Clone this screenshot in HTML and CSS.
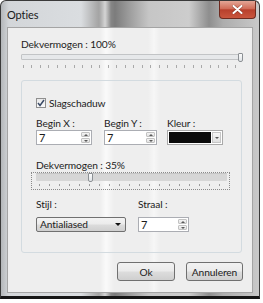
FILE: index.html
```html
<!DOCTYPE html>
<html lang="nl">
<head>
    <meta charset="UTF-8" />
    <title>Opties</title>
    <link rel="stylesheet" href="styles.css">
</head>
<body>

<div class="window">
    <div class="titlebar">
        <span class="title">Opties</span>
        <span class="close">
            <svg width="11" height="9" viewBox="0 0 11 9">
                <path d="M1.5 1 L9.5 8 M9.5 1 L1.5 8" stroke="#5a1f16" stroke-width="3" stroke-linecap="round" opacity="0.5"/>
                <path d="M1.5 1 L9.5 8 M9.5 1 L1.5 8" stroke="#fff" stroke-width="2" stroke-linecap="round"/>
            </svg>
        </span>
    </div>

    <div class="client">
        <!-- Opacity of the layer -->
        <div class="caption">Dekvermogen : 100%</div>
        <div class="slider slider-top">
            <div class="track"></div>
            <div class="thumb thumb-end"></div>
            <div class="ticks"></div>
        </div>

        <!-- Drop shadow settings -->
        <div class="group">
            <div class="check">
                <span class="box">
                    <svg width="8" height="8" viewBox="0 0 8 8">
                        <path d="M1 4 L3 6.5 L7 1" fill="none" stroke="#3a4a66" stroke-width="1.5"/>
                    </svg>
                </span>
                <span>Slagschaduw</span>
            </div>

            <div class="fields">
                <div class="field field-x">
                    <span class="field-label">Begin X :</span>
                    <div class="spin">
                        <span class="value">7</span>
                        <span class="arrows"><span class="up"></span><span class="down"></span></span>
                    </div>
                </div>
                <div class="field field-y">
                    <span class="field-label">Begin Y :</span>
                    <div class="spin">
                        <span class="value">7</span>
                        <span class="arrows"><span class="up"></span><span class="down"></span></span>
                    </div>
                </div>
                <div class="field field-color">
                    <span class="field-label">Kleur :</span>
                    <div class="color">
                        <span class="swatch"></span>
                        <span class="color-btn"><span class="tri"></span></span>
                    </div>
                </div>
            </div>

            <div class="caption caption-2">Dekvermogen : 35%</div>
            <div class="slider slider-box">
                <div class="track track-wide"></div>
                <div class="thumb thumb-35"></div>
                <div class="ticks ticks-wide"></div>
            </div>

            <div class="fields fields-2">
                <div class="field field-style">
                    <span class="field-label">Stijl :</span>
                    <div class="combo">
                        <span>Antialiased</span>
                        <span class="combo-tri"></span>
                    </div>
                </div>
                <div class="field field-radius">
                    <span class="field-label">Straal :</span>
                    <div class="spin">
                        <span class="value">7</span>
                        <span class="arrows"><span class="up"></span><span class="down"></span></span>
                    </div>
                </div>
            </div>
        </div>

        <div class="buttons">
            <button class="btn btn-ok">Ok</button>
            <button class="btn btn-cancel">Annuleren</button>
        </div>
    </div>
</div>

</body>
</html>
```

FILE: styles.css
```css
* {
    box-sizing: border-box;
}
body {
    margin: 0;
    background-color: #ffffff;
    font-family: 'Lato', sans-serif;
    font-size: 10.2px;
    letter-spacing: -0.1px;
    color: #1c1c1c;
}
.window {
    width: 260px;
    height: 299px;
    border: 1px solid #3a3a3a;
    border-bottom: 3px solid #161616;
    border-radius: 6px 6px 0 0;
    padding: 0 6px 3px 6px;
    display: flex;
    flex-direction: column;
    background:
        linear-gradient(to right, rgba(255,255,255,0) 98px, rgba(255,255,255,0.6) 104px, rgba(255,255,255,0) 110px),
        linear-gradient(to right, #b4b7ba 0, #d3d6d9 8px, #dadde0 80px, #a9a9a9 96px, #7c7c7c 114px, #9c9c9c 128px, #c6c6c6 148px, #cdcdcd 188px, #8e8e8e 208px, #adadad 222px, #c9c9c9 258px);
}
.titlebar {
    height: 26px;
    display: flex;
    justify-content: space-between;
    align-items: flex-start;
    margin-right: -3px;
}
.title {
    padding-top: 6px;
    font-size: 11px;
    line-height: 16px;
    color: #1a1a1a;
}
.close {
    width: 37px;
    height: 18px;
    border: 1px solid #6e2a1f;
    border-top: none;
    border-radius: 0 0 4px 4px;
    background: linear-gradient(#e3a696, #d06c58 45%, #b8402c 52%, #c9563e);
    display: flex;
    align-items: center;
    justify-content: center;
}
.client {
    flex: 1;
    border: 1px solid #a4a4a4;
    background:
        linear-gradient(to right, rgba(255,255,255,0) 92px, rgba(255,255,255,0.7) 98px, rgba(255,255,255,0) 106px, rgba(255,255,255,0) 140px, rgba(255,255,255,0.5) 146px, rgba(255,255,255,0) 152px),
        #eeeeee;
    padding: 8px 10px 0 13px;
}
.caption {
    line-height: 16px;
}
.slider {
    position: relative;
}
.slider-top {
    height: 28px;
    padding-top: 2px;
}
.track {
    height: 6px;
    border: 1px solid #c2c4c6;
    border-radius: 1px;
    background-color: #e6e8ea;
}
.ticks {
    height: 3px;
    margin-top: 5px;
    margin-left: 2px;
    margin-right: 2px;
    background: repeating-linear-gradient(to right, #a9a9a9 0 1px, transparent 1px 8.5px);
}
.thumb {
    position: absolute;
    width: 5px;
    height: 9px;
    border: 1px solid #8c9094;
    border-radius: 1px 1px 2px 2px;
    background: linear-gradient(#fbfbfb, #dfe3e6);
}
.thumb-end {
    right: -1px;
    top: 1px;
}
.group {
    height: 173px;
    border: 1px solid #d3dbe0;
    border-radius: 3px;
    padding: 14px 0 0 14px;
}
.check {
    display: flex;
    align-items: center;
    gap: 3px;
    line-height: 16px;
}
.box {
    width: 10px;
    height: 10px;
    border: 1px solid #8f8f8f;
    background: linear-gradient(#e9e9e9, #fafafa);
    display: flex;
    align-items: center;
    justify-content: center;
}
.fields {
    display: flex;
    margin-top: 6px;
}
.field {
    display: flex;
    flex-direction: column;
}
.field-label {
    line-height: 13px;
}
.field-x { width: 56px; margin-right: 12px; }
.field-y { width: 53px; margin-right: 10px; }
.field-color { width: 56px; }
.spin {
    height: 15px;
    display: flex;
    border: 1px solid #abadb3;
    background-color: #ffffff;
    padding: 1px 1px 1px 0;
}
.value {
    flex: 1;
    padding-left: 2px;
    line-height: 12px;
    font-size: 11px;
}
.arrows {
    width: 9px;
    display: flex;
    flex-direction: column;
    gap: 1px;
}
.up, .down {
    flex: 1;
    border: 1px solid #c2c2c2;
    border-radius: 1px;
    background: linear-gradient(#f4f4f4, #e2e2e2);
    position: relative;
}
.up::after, .down::after {
    content: "";
    position: absolute;
    left: 1.5px;
    top: 1px;
    border-left: 2px solid transparent;
    border-right: 2px solid transparent;
}
.up::after { border-bottom: 2px solid #5a5a5a; }
.down::after { border-top: 2px solid #5a5a5a; }
.color {
    height: 15px;
    display: flex;
    border: 1px solid #a9a9a9;
    background-color: #ffffff;
    padding: 1px;
    gap: 1px;
}
.swatch {
    flex: 1;
    background-color: #0a0a0a;
}
.color-btn {
    width: 9px;
    border: 1px solid #c6c6c6;
    background: linear-gradient(#f6f6f6, #e0e0e0);
    display: flex;
    align-items: center;
    justify-content: center;
}
.tri {
    border-left: 2px solid transparent;
    border-right: 2px solid transparent;
    border-top: 2px solid #555;
}
.caption-2 {
    margin-top: 13px;
    line-height: 14px;
}
.slider-box {
    margin-left: -5px;
    width: 199px;
    height: 18px;
    border: 1px dotted #8a8a8a;
    padding: 0 2px 0 4px;
}
.track-wide {
    height: 8px;
    border: none;
    border-top: 1px solid #c4c4c4;
    background-color: #d6d6d6;
}
.ticks-wide {
    margin-top: 3px;
    margin-left: 0;
    height: 2px;
    background: repeating-linear-gradient(to right, transparent 0 3px, #9c9c9c 3px 4px, transparent 4px 10px);
}
.thumb-35 {
    left: 56px;
    top: 0;
}
.fields-2 {
    margin-top: 7px;
}
.fields-2 .field-label {
    line-height: 14px;
    margin-bottom: 6px;
}
.field-style { width: 90px; margin-right: 12px; }
.field-radius { width: 51px; }
.combo {
    height: 15px;
    border: 1px solid #707070;
    border-radius: 2px;
    background: linear-gradient(#f3f3f3, #ebebeb 48%, #dcdcdc 52%, #cfcfcf);
    display: flex;
    justify-content: space-between;
    align-items: center;
    padding: 0 3px 0 3px;
    line-height: 13px;
}
.combo-tri {
    border-left: 3px solid transparent;
    border-right: 3px solid transparent;
    border-top: 3px solid #111;
    margin-right: 1px;
}
.buttons {
    display: flex;
    justify-content: flex-end;
    gap: 11px;
    margin-top: 9px;
    margin-right: -1px;
}
.btn {
    height: 19px;
    border: 1px solid #707070;
    border-radius: 3px;
    background: linear-gradient(#f2f2f2, #ebebeb 48%, #dddddd 52%, #cfcfcf);
    font-family: 'Lato', sans-serif;
    font-size: 10.2px;
    letter-spacing: -0.1px;
    color: #1c1c1c;
    padding: 0;
    line-height: 16px;
}
.btn-ok { width: 58px; }
.btn-cancel { width: 57px; }
```
